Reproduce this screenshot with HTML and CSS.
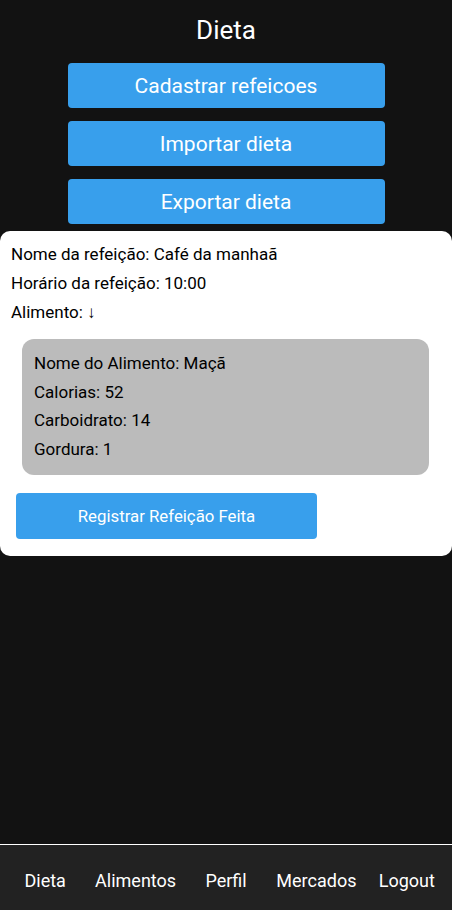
FILE: index.html
```html
<!DOCTYPE html>
<html lang="pt">
<head>
<meta charset="utf-8">
<title>Dieta</title>
<link rel="stylesheet" href="styles.css">
</head>
<body>
<div class="app">
  <main class="main">
    <h1 class="title">Dieta</h1>
    <div class="actions">
      <button class="btn">Cadastrar refeicoes</button>
      <button class="btn">Importar dieta</button>
      <button class="btn">Exportar dieta</button>
    </div>
    <section class="card">
      <p class="line">Nome da refeição: Café da manhaã</p>
      <p class="line">Horário da refeição: 10:00</p>
      <p class="line">Alimento: ↓</p>
      <div class="food">
        <p class="fline">Nome do Alimento: Maçã</p>
        <p class="fline">Calorias: 52</p>
        <p class="fline">Carboidrato: 14</p>
        <p class="fline">Gordura: 1</p>
      </div>
      <button class="register">Registrar Refeição Feita</button>
    </section>
  </main>
  <nav class="nav">
    <span class="nav-item">Dieta</span>
    <span class="nav-item">Alimentos</span>
    <span class="nav-item">Perfil</span>
    <span class="nav-item">Mercados</span>
    <span class="nav-item">Logout</span>
  </nav>
</div>
</body>
</html>
```
FILE: styles.css
```css
* { box-sizing: border-box; }
html, body { margin: 0; padding: 0; }
body {
  background: #121212;
  font-family: Roboto, "Noto Sans", "Liberation Sans", sans-serif;
  color: #fff;
}
.app {
  height: 910px;
  display: flex;
  flex-direction: column;
}
.main {
  flex: 1;
  display: flex;
  flex-direction: column;
}
.title {
  margin: 0;
  padding-top: 16px;
  font-size: 26px;
  font-weight: 400;
  line-height: 28px;
  text-align: center;
}
.actions {
  display: flex;
  flex-direction: column;
  align-items: center;
  gap: 13px;
  margin-top: 19px;
}
.btn {
  width: 317px;
  height: 45px;
  border: none;
  border-radius: 4px;
  background: #389fec;
  color: #fff;
  font-family: inherit;
  font-size: 21px;
  padding: 0;
}
.card {
  margin-top: 7px;
  background: #fff;
  color: #000;
  border-radius: 10px;
  padding: 9px 0 17px 0;
}
.line {
  margin: 0;
  padding-left: 11px;
  font-size: 17px;
  line-height: 29px;
}
.food {
  margin: 12px 23px 0 22px;
  background: #bbbbbb;
  border-radius: 12px;
  padding: 10px 12px 12px 12px;
}
.fline {
  margin: 0;
  font-size: 17px;
  line-height: 28.5px;
}
.register {
  display: block;
  margin: 18px 0 0 16px;
  width: 301px;
  height: 46px;
  border: none;
  border-radius: 4px;
  background: #389fec;
  color: #fff;
  font-family: inherit;
  font-size: 16.8px;
  padding: 0;
}
.nav {
  height: 66px;
  border-top: 1px solid #fff;
  background: #222222;
  display: flex;
  align-items: center;
  padding-top: 6px;
}
.nav-item {
  flex: 1;
  text-align: center;
  font-size: 18px;
  color: #fff;
}
```
